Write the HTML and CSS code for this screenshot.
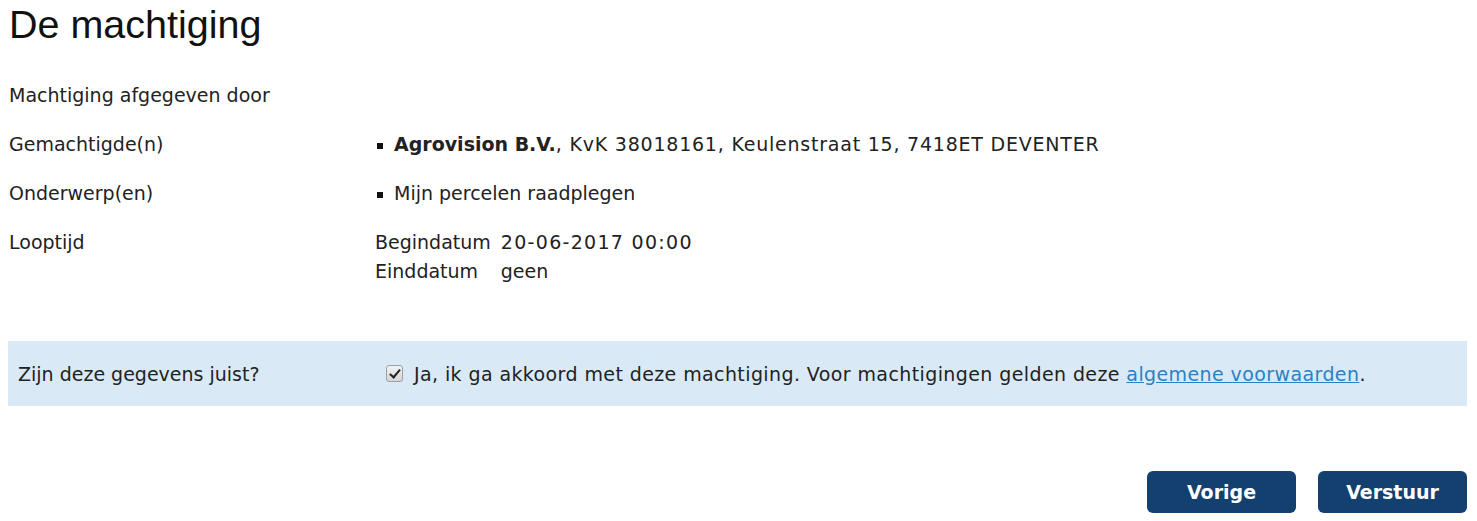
FILE: index.html
```html
<!DOCTYPE html>
<html lang="nl">
<head>
<meta charset="utf-8">
<title>De machtiging</title>
<link rel="stylesheet" href="styles.css">
</head>
<body>
<main class="page">
  <h1 class="title">De machtiging</h1>
  <div class="rows">
    <div class="row">
      <div class="label">Machtiging afgegeven door</div>
      <div class="value"></div>
    </div>
    <div class="row">
      <div class="label">Gemachtigde(n)</div>
      <div class="value"><ul class="bullets"><li><strong>Agrovision B.V.</strong><span class="wide">, KvK 38018161, Keulenstraat 15, 7418ET DEVENTER</span></li></ul></div>
    </div>
    <div class="row">
      <div class="label">Onderwerp(en)</div>
      <div class="value"><ul class="bullets"><li>Mijn percelen raadplegen</li></ul></div>
    </div>
    <div class="row">
      <div class="label">Looptijd</div>
      <div class="value">
        <div class="dates">
          <span>Begindatum</span><span class="num">20-06-2017 00:00</span>
          <span>Einddatum</span><span>geen</span>
        </div>
      </div>
    </div>
  </div>
  <div class="confirm">
    <div class="label">Zijn deze gegevens juist?</div>
    <label class="check"><input type="checkbox" checked><span class="check-text">Ja, ik ga akkoord met deze machtiging. Voor machtigingen gelden deze <a href="#">algemene voorwaarden</a>.</span></label>
  </div>
  <div class="actions">
    <button class="btn" type="button">Vorige</button>
    <button class="btn" type="button">Verstuur</button>
  </div>
</main>
</body>
</html>
```

FILE: styles.css
```css
body {
  margin: 0;
  background: #fff;
  color: #222;
  font-family: "DejaVu Sans", Verdana, sans-serif;
  font-size: 19px;
}
.page {
  padding: 0 10px 0 8px;
}
.title {
  font-family: "Liberation Sans", Arial, sans-serif;
  font-weight: normal;
  font-size: 39.5px;
  color: #111;
  margin: 0;
  padding-left: 1px;
  line-height: 48px;
}
.rows {
  margin-top: 33px;
  display: flex;
  flex-direction: column;
  gap: 20px;
}
.row {
  display: flex;
  line-height: 29px;
  min-height: 29px;
}
.label {
  width: 366px;
  flex: none;
  padding-left: 1px;
}
.value {
  flex: 1;
}
.wide {
  letter-spacing: 0.78px;
}
.num {
  letter-spacing: 1.3px;
}
.bullets {
  list-style: none;
  margin: 0;
  padding: 0;
}
.bullets li {
  position: relative;
  padding-left: 19px;
}
.bullets li::before {
  content: "";
  position: absolute;
  left: 2px;
  top: 13px;
  width: 6px;
  height: 6px;
  background: #111;
}
.dates {
  display: grid;
  grid-template-columns: auto auto;
  justify-content: start;
  column-gap: 10px;
}
.confirm {
  margin-top: 55px;
  background: #d9eaf6;
  height: 65px;
  display: flex;
  align-items: center;
}
.confirm .label {
  width: 368px;
  padding-left: 10px;
}
.check {
  display: flex;
  align-items: center;
  gap: 11px;
  margin-left: 0;
}
.check-text {
  letter-spacing: 0.4px;
}
.check input {
  appearance: none;
  -webkit-appearance: none;
  margin: 0;
  width: 17px;
  height: 17px;
  border: 1px solid #a0a0a0;
  border-radius: 3px;
  background: linear-gradient(#f2f2f2, #d6d6d6);
  position: relative;
  flex: none;
}
.check input:checked::after {
  content: "";
  position: absolute;
  left: 5px;
  top: 1px;
  width: 4px;
  height: 9px;
  border: solid #222;
  border-width: 0 2.5px 2.5px 0;
  transform: rotate(40deg);
}
.check a {
  color: #2a82c4;
}
.actions {
  display: flex;
  justify-content: flex-end;
  gap: 22px;
  margin-top: 65px;
}
.btn {
  width: 149px;
  height: 42px;
  border: none;
  border-radius: 6px;
  background: #13406f;
  color: #fff;
  font-family: "DejaVu Sans", Verdana, sans-serif;
  font-weight: bold;
  font-size: 19px;
  cursor: pointer;
}
```
